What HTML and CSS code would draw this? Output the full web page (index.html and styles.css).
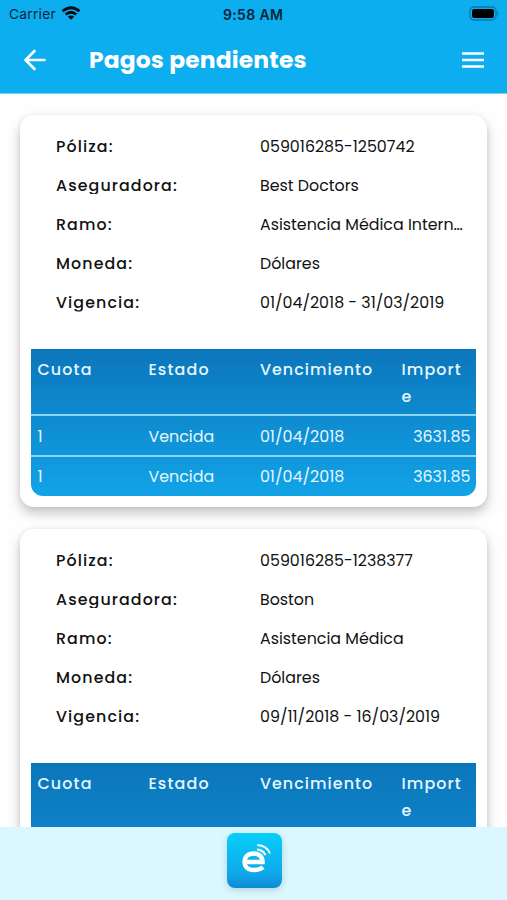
FILE: index.html
```html
<!DOCTYPE html>
<html lang="es">
<head>
<meta charset="utf-8">
<title>Pagos pendientes</title>
<link rel="stylesheet" href="styles.css">
</head>
<body>
<div class="app">
  <header class="header">
    <div class="status">
      <span class="carrier">Carrier</span>
      <svg class="wifi" width="20" height="14" viewBox="0 0 20 14" fill="none" stroke="#050b10" stroke-width="2.8"><path d="M1.5 5.2Q10-1.7 18.5 5.2M4.7 8.5Q10 4 15.3 8.5"/><path d="M6.8 10.8Q10 8 13.2 10.8L10 13.8Z" fill="#050b10" stroke="none"/></svg>
      <span class="clock">9:58 AM</span>
      <svg class="battery" width="31" height="15" viewBox="0 0 31 15"><rect x="1" y="1" width="26" height="13" rx="4" fill="none" stroke="#0878ab" stroke-width="1.3"/><rect x="3" y="3" width="22" height="9" rx="2.2" fill="#000"/><path d="M28.3 5Q30.7 7.5 28.3 10Z" fill="#0878ab"/></svg>
    </div>
    <div class="toolbar">
      <svg class="back" width="24" height="22" viewBox="0 0 24 22" fill="none" stroke="#fff" stroke-width="2.6" stroke-linecap="round" stroke-linejoin="round"><path d="M11.5 2L2.5 11L11.5 20M3 11H21.5"/></svg>
      <h1 class="title">Pagos pendientes</h1>
      <svg class="menu" width="22" height="16" viewBox="0 0 22 16" fill="#fff"><path d="M0 .2H22V2.8H0ZM0 6.7H22V9.3H0ZM0 13.2H22V15.8H0Z"/></svg>
    </div>
  </header>
  <main class="list">
    <section class="card">
      <dl class="details">
        <dt>Póliza:</dt><dd>059016285-1250742</dd>
        <dt>Aseguradora:</dt><dd>Best Doctors</dd>
        <dt>Ramo:</dt><dd>Asistencia Médica Intern…</dd>
        <dt>Moneda:</dt><dd>Dólares</dd>
        <dt>Vigencia:</dt><dd>01/04/2018 - 31/03/2019</dd>
      </dl>
      <div class="table">
        <div class="row head"><span>Cuota</span><span>Estado</span><span class="due">Vencimiento</span><span>Import<br>e</span></div>
        <div class="row"><span>1</span><span>Vencida</span><span>01/04/2018</span><span class="amount">3631.85</span></div>
        <div class="row"><span>1</span><span>Vencida</span><span>01/04/2018</span><span class="amount">3631.85</span></div>
      </div>
    </section>
    <section class="card">
      <dl class="details">
        <dt>Póliza:</dt><dd>059016285-1238377</dd>
        <dt>Aseguradora:</dt><dd>Boston</dd>
        <dt>Ramo:</dt><dd>Asistencia Médica</dd>
        <dt>Moneda:</dt><dd>Dólares</dd>
        <dt>Vigencia:</dt><dd>09/11/2018 - 16/03/2019</dd>
      </dl>
      <div class="table tall">
        <div class="row head"><span>Cuota</span><span>Estado</span><span class="due">Vencimiento</span><span>Import<br>e</span></div>
      </div>
    </section>
  </main>
  <footer class="footer">
    <div class="logo">
      <svg width="54" height="54" viewBox="0 0 54 54" fill="none" stroke="#fff"><path d="M17.5 29H35.5C35.5 23.5 32 20.5 26.7 20.5C20.8 20.5 17.6 23.8 17.6 28.9C17.6 34 21 37 27 37C30.5 37 33.8 36.2 36 34.2" stroke-width="4.4"/><path d="M30 16.5Q36 17 38.5 22M30.3 12.1Q40 12.8 43 20.5" stroke-width="2"/></svg>
    </div>
  </footer>
</div>
</body>
</html>
```
FILE: styles.css
```css
* { box-sizing: border-box; }
body { margin: 0; background: #fefefe; font-family: Poppins, Inter, sans-serif; color: #111; }
.app { display: flex; flex-direction: column; height: 900px; overflow: hidden; }
.header { flex: 0 0 94px; background: #0caeef; border-bottom: 1px solid #79d2f5; }
.status { display: flex; align-items: center; height: 28px; padding: 0 7px 0 9px; font-family: Inter, sans-serif; font-size: 13.7px; color: #062637; }
.carrier { width: 47px; letter-spacing: .3px; }
.wifi { margin: -2px 0 0 5px; }
.clock { width: 64px; margin-left: 142px; font-weight: 600; font-size: 14px; letter-spacing: .35px; white-space: nowrap; }
.battery { margin-left: auto; margin-top: -1px; }
.toolbar { display: flex; align-items: center; height: 64px; padding: 0 23px; }
.title { margin: -1px 0 0 42px; color: #fff; font-size: 23.4px; font-weight: 700; letter-spacing: .15px; white-space: nowrap; }
.menu { margin-left: auto; }
.list { flex: 1; min-height: 0; overflow: hidden; padding: 21px 19.6px 0 20.4px; }
.card { height: 392px; margin-bottom: 22px; padding: 12px 11px 0; background: #fff; border-radius: 14px; box-shadow: 0 6px 12px rgba(0,0,0,.23), 0 0 5px rgba(0,0,0,.06); }
.details { display: grid; grid-template-columns: 204px 205px; grid-auto-rows: 39.1px; margin: 0 0 0 24.6px; height: 222px; font-size: 15.85px; }
dt { height: 29px; margin-top: 4px; line-height: 32px; overflow: hidden; font-weight: 500; letter-spacing: 1.1px; clip-path: inset(0 0 5px 0); }
dd { margin: 0; line-height: 40px; white-space: nowrap; }
.table { height: 147px; overflow: hidden; border-radius: 0 0 12px 12px; background: linear-gradient(#0c76bb, #12a3e7); color: #e5f7ff; }
.tall { height: 260px; }
.row { display: grid; grid-template-columns: 111px 111.5px 141.5px 1fr; height: 40.5px; padding: 0 6px; border-bottom: 2px solid #8ed4f7; font-size: 15.9px; line-height: 41px; }
.row:last-child { border-bottom: 0; }
.head { height: 67px; padding-top: 7px; font-weight: 500; letter-spacing: 1.15px; line-height: 27px; }
.due { letter-spacing: 1.05px; }
.row:last-child:not(.head) { line-height: 40px; }
.amount { text-align: right; }
.footer { flex: 0 0 73px; display: flex; justify-content: center; padding: 6px 0 0 1px; background: #dbf7ff; }
.logo { width: 55px; height: 55px; border-radius: 8px; background: linear-gradient(#06cff9, #11a7eb 75%, #0e8bd3); box-shadow: 0 2px 7px rgba(0,70,100,.2); }
```
